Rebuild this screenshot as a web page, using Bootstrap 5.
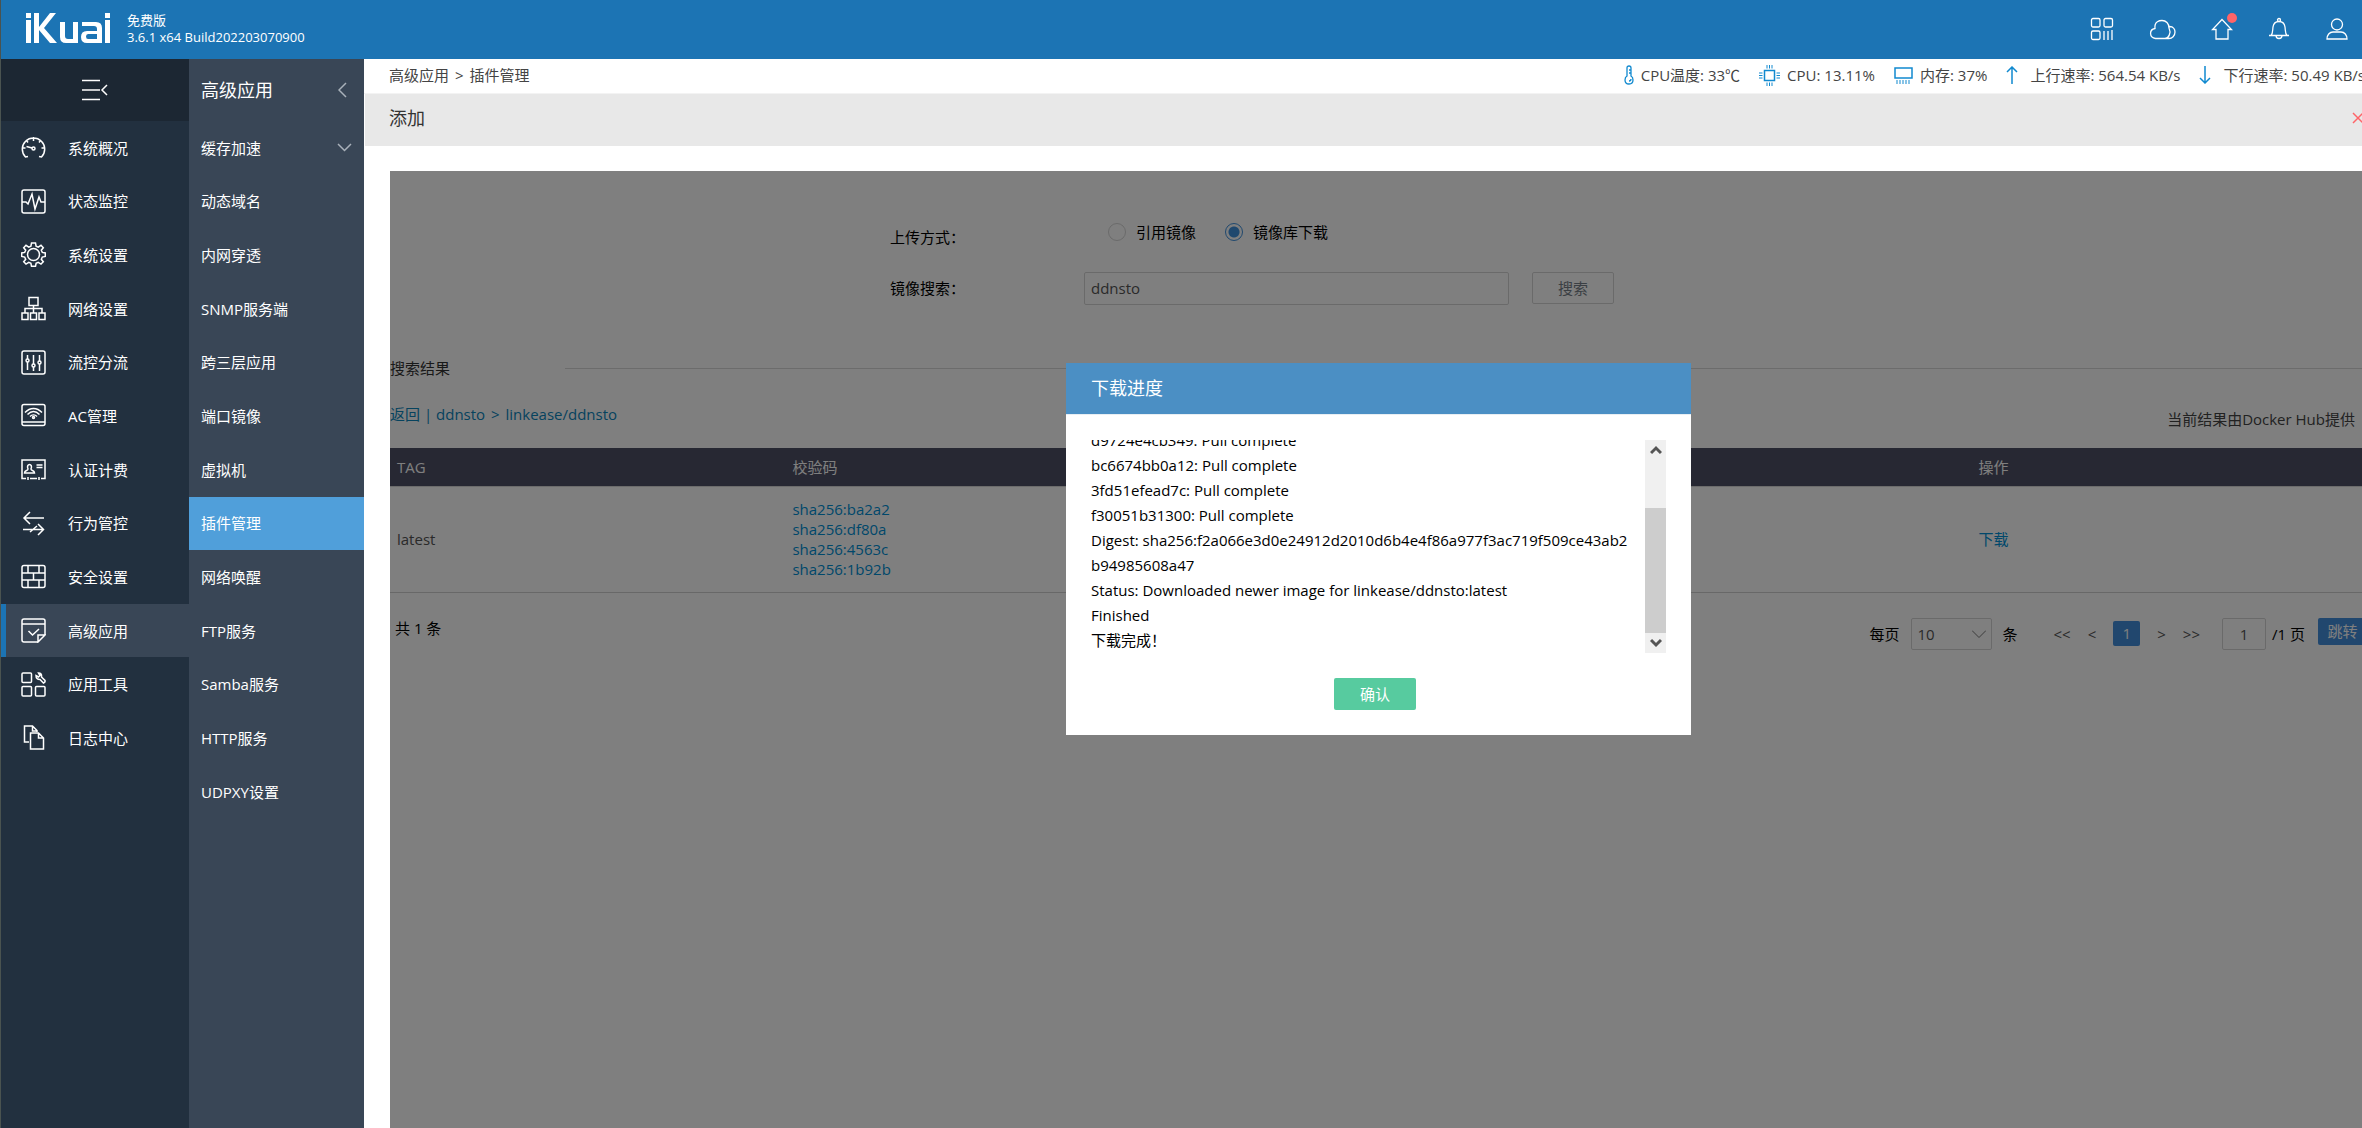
<!DOCTYPE html>
<html lang="zh-CN">
<head>
<meta charset="utf-8">
<meta name="viewport" content="width=device-width, initial-scale=1">
<title>iKuai - 插件管理</title>
<link href="https://cdn.jsdelivr.net/npm/bootstrap@5.3.0/dist/css/bootstrap.min.css" rel="stylesheet">
<style>
  body { font-family: "Open Sans", "Noto Sans CJK SC", sans-serif; font-size: 15px; line-height: 20px; color: #000; background: #fff; overflow: hidden; }
  a { text-decoration: none; }
  svg { fill: none; stroke: currentColor; stroke-width: 1.5; flex: none; display: block; }
  .shell { border-left: 1px solid #4a5350; }
  .topbar { height: 59px; background: #1c74b4; color: #fff; padding: 0 13px 2px 24px; }
  .logo { stroke: none; fill: #fff; }
  .version { font-size: 13px; line-height: 17px; margin-left: 16px; }
  .tools { gap: 35px; }
  .tools button { color: #fff; }
  .tools svg { stroke-width: 1.3; }
  .plain { background: none; border: 0; padding: 0; line-height: 20px; }
  .notice { position: absolute; top: -4px; right: -4px; width: 10px; height: 10px; border-radius: 50%; background: #ff6468; }
  .rail { width: 188px; background: #22303f; }
  .rail-top { height: 62px; background: #1c2733; color: #fff; }
  .menu-list { display: grid; grid-auto-rows: 1fr; flex: none; }
  .menu-main { height: 644px; }
  .menu-sub { height: 698px; }
  .menu-list a { color: #fff; height: 53px; display: flex; align-items: center; }
  .menu-main a { padding-left: 15px; border-left: 5px solid transparent; gap: 22px; }
  .menu-main a.current { background: #394656; border-left-color: #1c74b4; }
  .subrail { width: 175px; background: #394656; color: #fff; }
  .subrail-top { height: 62px; padding: 0 17px 0 12px; font-size: 18px; }
  .menu-sub a { padding: 0 12px; justify-content: space-between; }
  .menu-sub a.current { background: #509fda; }
  .chev { color: #a9b1ba; }
  .crumbs { height: 35px; padding: 0 0 2px 25px; border-bottom: 1px solid #f3f3f3; color: #444; }
  .crumbs a { color: #444; }
  .sep { padding: 0 2px; }
  .status { gap: 19px; margin-right: -3px; white-space: nowrap; }
  .status svg { color: #1089cf; }
  .status span { display: flex; align-items: center; gap: 7px; }
  .status .rate { gap: 12px; }
  .titlebar { height: 52px; background: #e8e8e8; padding: 0 0 4px 24px; color: #333; margin-left: 1px; }
  .titlebar h1 { font-size: 18px; font-weight: 400; margin: 0; line-height: 24px; }
  .titlebar button { color: #ff6468; margin-right: -2px; }
  .panel { margin: 25px -5px 0 26px; position: relative; padding-top: 45px; }
  .form-line { height: 48px; padding-left: 500px; }
  .form-line .lbl { width: 194px; }
  .form-line .upper { padding-top: 11px; }
  .form-check.choice { padding: 0; margin: 4px 0 0 24px; }
  .form-check.choice + .choice { margin-left: 29px; }
  .form-check-input.pick { width: 18px; height: 18px; margin: 0 10px 0 0; border: 1px solid #d5d5d5; flex: none; }
  .form-check-input.pick:checked { background: radial-gradient(circle, #3e90dc 0 5px, transparent 6px); border-color: #3e90dc; }
  .field { border: 1px solid #d5d5d5; border-radius: 2px; background: transparent; color: #555; padding: 0 6px; }
  .field-search { width: 425px; height: 33px; margin-right: 23px; }
  .act { width: 82px; height: 32px; border: 1px solid #d5d5d5; border-radius: 2px; background: transparent; color: #777f88; padding: 0; font-size: 15px; }
  .result-head { color: #333; margin-top: 46px; gap: 115px; }
  .result-head hr { margin: 0; border-color: #d8d8d8; opacity: 1; }
  .path-line { margin-top: 26px; color: #0c86bd; height: 44px; }
  .path-line a { color: #0c86bd; }
  .provider { color: #444; padding: 5px 12px 0 0; }
  .grid-table { table-layout: fixed; margin: 0; color: #555; }
  .grid-table th { background: #4e5066; color: #fff; font-weight: 400; height: 38px; padding: 0 7px; border: 0; vertical-align: middle; box-shadow: none; }
  .grid-table td { height: 106px; padding: 0 7px; vertical-align: middle; border-top: 1px solid #d8d8d8; border-bottom: 1px solid #d0d0d0; color: #555; background: transparent; box-shadow: none; }
  .grid-table td a { color: #0090d6; display: block; }
  .pager { padding: 25px 0 0 5px; }
  .pager .field { height: 32px; }
  .pager select.field { width: 81px; margin: 0 11px; appearance: none; background: url("data:image/svg+xml,%3Csvg xmlns='http://www.w3.org/2000/svg' viewBox='0 0 14 8'%3E%3Cpath d='M0 .5l7 7 7-7' fill='none' stroke='%23777'/%3E%3C/svg%3E") no-repeat right 5px center / 14px 8px; }
  .pager input.field { width: 44px; margin-right: 6px; text-align: center; }
  .pg { gap: 17px; margin: 0 22px 0 36px; }
  .pg a { color: #555; }
  .pg .now { width: 27px; height: 25px; line-height: 25px; text-align: center; color: #fff; background: #428edc; border-radius: 2px; }
  .jump { width: 49px; height: 27px; border: 0; border-radius: 2px; background: #428edc; color: #fff; padding: 0; margin-left: 13px; }
  .shade { position: absolute; inset: 0; background: rgba(0,0,0,.5); padding-top: 192px; }
  .dialog { width: 625px; background: #fff; }
  .dialog-head { height: 52px; background: #4b8fc4; color: #fff; padding: 0 25px; border-bottom: 1px solid #e8eef3; }
  .dialog-head h2 { font-size: 18px; font-weight: 400; margin: 0; }
  .dialog-body { padding: 25px; }
  .log { height: 213px; overflow: hidden; line-height: 25px; word-break: break-all; padding-right: 12px; }
  .log-bar { width: 21px; background: #f0f0f0; color: #555; flex: none; }
  .log-bar svg { margin: 0 auto; stroke-width: 3; }
  .log-thumb { height: 125px; background: #cdcdcd; }
  .ok { width: 82px; height: 32px; background: #57cb9f; color: #fff; border: 0; border-radius: 2px; padding: 0; margin: 25px 7px 0 0; }
</style>
<script src="https://cdn.jsdelivr.net/npm/bootstrap@5.3.0/dist/js/bootstrap.bundle.min.js"></script>
</head>
<body>
<div class="shell d-flex flex-column vh-100">
  <header class="topbar d-flex align-items-center flex-shrink-0">
    <svg class="logo" width="86" height="31" viewBox="0 0 86 31" role="img" aria-label="iKuai"><path d="M1 0h5v5H1zM1 7h5v23H1zM80 0h5v5h-5zM80 7h5v23h-5zM9 0h5v14L25 0h6L19 15l13 15h-7L14 17v13H9zM35 9h5v14q0 3 3 3h5V9h5v21H41q-6 0-6-6zM57 9h14q6 0 6 6v15H62q-6 0-6-6t6-6h10v-2q0-3-3-3H57zM72 21h-9q-2 0-2 2.500t2 2.500h9z"/></svg>
    <div class="version"><div>免费版</div><div>3.6.1 x64 Build202203070900</div></div>
    <div class="tools d-flex align-items-center ms-auto">
      <button class="plain" aria-label="应用"><svg width="24" height="24" viewBox="0 0 24 24"><rect x="1.500" y="1.500" width="8.500" height="8.500" rx="1.500"/><rect x="14" y="1.500" width="8.500" height="8.500" rx="1.500"/><rect x="1.500" y="14" width="8.500" height="8.500" rx="1.500"/><path d="M14 14v9M18 14v9M22 13v10"/></svg></button>
      <button class="plain" aria-label="云"><svg width="27" height="24" viewBox="0 0 27 24"><path d="M16 21.500H6.500c-6.500-1-6.500-9-.5-10C5 4 11 3.500 13 3.500c4 0 7 3 7 7.500 2.500 5-.5 10.500-4 10.500zM20.500 9.500c4 0 5.500 3 5.500 5.500 0 4-3 6.500-6 6.500h-4"/></svg></button>
      <button class="plain position-relative" aria-label="升级"><svg width="22" height="24" viewBox="0 0 22 24"><path d="M11 2.500L1.500 12.500H5V22h12v-9.500h3.500z"/></svg><span class="notice"></span></button>
      <button class="plain" aria-label="消息"><svg width="22" height="24" viewBox="0 0 22 24"><path d="M1 18.500h20M3 18.500c2-2 1.500-5 2-8.500.5-3.500 3-5.500 6-5.500s5.500 2 6 5.500c.5 3.500 0 6.500 2 8.500M8 18.500c0 4 6 4 6 0"/><circle cx="11" cy="3" r="1.500"/></svg></button>
      <button class="plain" aria-label="用户"><svg width="24" height="24" viewBox="0 0 24 24"><circle cx="12" cy="7.500" r="5.500"/><path d="M2 22c0-4 2.500-7 6-7h8c3.500 0 6 3 6 7z"/></svg></button>
    </div>
  </header>
  <div class="d-flex flex-grow-1">
    <nav class="rail flex-shrink-0 d-flex flex-column">
      <div class="rail-top d-flex align-items-center justify-content-center"><button class="plain text-white" aria-label="收起"><svg width="26" height="22" viewBox="0 0 26 22"><path d="M0 1.500h18M0 11h18M0 20.500h18M25 6l-5 5 5 5"/></svg></button></div>
      <div class="menu-list menu-main">
        <a href="#"><svg width="25" height="25" viewBox="0 0 25 25"><path d="M7 21.500L4.500 22A11.200 11.200 0 1120.500 22L18 21.500M12.500 2v4M5 5l2 2.500M20 5l-2 2.500M1.500 13h3M20.500 13h3M5.500 11.500L11 13"/><circle cx="12.500" cy="13.500" r="1.500"/></svg>系统概况</a>
        <a href="#"><svg width="25" height="25" viewBox="0 0 25 25"><rect x="1" y="1" width="23" height="23" rx="2"/><path d="M1 13h4l2 2 4-10 3 15 4-12 2 5h4"/></svg>状态监控</a>
        <a href="#"><svg width="25" height="25" viewBox="0 0 25 25"><path d="M10.500 1h4l.6 3.200 2.100.9L20 3.300 22.300 5.700 20.300 8.200l1 2.200 3 .5v3.600l-3 .6-1 2.200 2 2.500-2.300 2.300-2.800-1.700-2.100.9-.6 3h-4l-.6-3-2.100-.9L5 22.100l-2.300-2.300 2-2.500-1-2.200-3-.6v-3.600l3-.5 1-2.200-2-2.500L5 3.300l2.800 1.800 2.100-.9z"/><circle cx="12.500" cy="12.500" r="6"/></svg>系统设置</a>
        <a href="#"><svg width="25" height="25" viewBox="0 0 25 25"><path d="M8 1.500h9v8H8zM12.500 9.500V17M4 17v-4.500h17V17M1 17h6v6.500H1zM9.500 17h6v6.500h-6zM18 17h6v6.500h-6z"/></svg>网络设置</a>
        <a href="#"><svg width="25" height="25" viewBox="0 0 25 25"><rect x="1" y="1" width="23" height="23" rx="2"/><path d="M6.500 5v4M6.500 12v8M12.500 5v9M12.500 17v4M18.500 5v6M18.500 14v7"/><circle cx="6.500" cy="10.500" r="1.500"/><circle cx="12.500" cy="15.500" r="1.500"/><circle cx="18.500" cy="12.500" r="1.500"/></svg>流控分流</a>
        <a href="#"><svg width="25" height="25" viewBox="0 0 25 25"><rect x="1" y="1.500" width="23" height="21" rx="2"/><path d="M1 19h23M4 9.500c5-5.500 12-5.500 17 0M6.500 11.500c4-4 8-4 12 0M9 13.500c2-2 5-2 7 0"/><circle cx="12.500" cy="14.500" r="1"/></svg>AC管理</a>
        <a href="#"><svg width="25" height="25" viewBox="0 0 25 25"><path d="M5 21.500H1V3h23v18.500h-4M9 21.500h7M7 20v3M18 20v3M15.500 8h6M15.500 10.500h6"/><path d="M3.500 16h10c0-3-3.500-2-3.500-4 2.500-6-5.500-6-3 0 0 2-3.500 1-3.500 4z"/></svg>认证计费</a>
        <a href="#"><svg width="25" height="25" viewBox="0 0 25 25"><path d="M23 7H3M9 1L3 7l6 6M2 18.500h20.500M17 13l5.500 5.500L17 24M9 21l7-6"/></svg>行为管控</a>
        <a href="#"><svg width="25" height="25" viewBox="0 0 25 25"><rect x="1" y="1.500" width="23" height="22" rx="2"/><path d="M1 9h23M1 16h23M7 1.500V9M18 1.500V9M12.500 9v7M7 16v7.500M18 16v7.500"/></svg>安全设置</a>
        <a href="#" class="current"><svg width="25" height="25" viewBox="0 0 25 25"><path d="M24 17V3q0-2-2-2H3Q1 1 1 3v19q0 2 2 2h14zl-7 7v-7zM1 6h23M7.500 13l4 4 6.500-6"/></svg>高级应用</a>
        <a href="#"><svg width="25" height="25" viewBox="0 0 25 25"><rect x="1" y="1" width="9.500" height="9.500" rx="1"/><rect x="1" y="14.500" width="9.500" height="9.500" rx="1"/><rect x="14.500" y="14.500" width="9.500" height="9.500" rx="1"/><path d="M15 3.500q0 4 4 4l3.500 3.500q2-1 1.500-2.500L20.500 5q.5-4-3-4l1.500 2.500-1.500 1.500z"/></svg>应用工具</a>
        <a href="#"><svg width="25" height="25" viewBox="0 0 25 25"><path d="M8 17H3.500V1h8l4.500 4.500V7M11.500 1v5h4.500M9.500 8h8l5 5v11h-13zM17.500 8v5h5"/></svg>日志中心</a>
      </div>
    </nav>
    <nav class="subrail flex-shrink-0 d-flex flex-column">
      <div class="subrail-top d-flex align-items-center justify-content-between"><span>高级应用</span><svg class="chev" width="9" height="16" viewBox="0 0 9 16"><path d="M8 1L1 8l7 7"/></svg></div>
      <div class="menu-list menu-sub">
        <a href="#">缓存加速<svg class="chev" width="15" height="9" viewBox="0 0 15 9"><path d="M1 1l6.500 6.500L14 1"/></svg></a>
        <a href="#">动态域名</a><a href="#">内网穿透</a><a href="#">SNMP服务端</a><a href="#">跨三层应用</a><a href="#">端口镜像</a><a href="#">虚拟机</a><a href="#" class="current">插件管理</a><a href="#">网络唤醒</a><a href="#">FTP服务</a><a href="#">Samba服务</a><a href="#">HTTP服务</a><a href="#">UDPXY设置</a>
      </div>
    </nav>
    <main class="flex-grow-1 d-flex flex-column">
      <div class="crumbs d-flex align-items-center justify-content-between">
        <div><a href="#">高级应用</a> <span class="sep">&gt;</span> 插件管理</div>
        <div class="status d-flex">
          <span><svg width="10" height="20" viewBox="0 0 10 20"><path d="M3 11V3q0-2 2-2t2 2v8q2 1 2 4 0 4-4 4t-4-4q0-3 2-4zM5 5h2M5 8h2M5 16q2 0 2-2" stroke-width="1.300"/></svg>CPU温度: 33℃</span>
          <span><svg width="21" height="21" viewBox="0 0 21 21"><rect x="5.500" y="5.500" width="10" height="10"/><path d="M8 0v3.500M10.500 0v3.500M13 0v3.500M8 17.500V21M10.500 17.500V21M13 17.500V21M0 8h3.500M0 10.500h3.500M0 13h3.500M17.500 8H21M17.500 10.500H21M17.500 13H21" stroke-width="1"/></svg>CPU: 13.11%</span>
          <span><svg width="19" height="17" viewBox="0 0 19 17"><rect x="1" y="1" width="17" height="10"/><path d="M3 13v4M6 13v4M9 13v4M12 13v4M15 13v4" stroke-width="1"/></svg>内存: 37%</span>
          <span class="rate"><svg width="12" height="18" viewBox="0 0 12 18"><path d="M6 18V1M1 6l5-5 5 5"/></svg>上行速率: 564.54 KB/s</span>
          <span class="rate"><svg width="12" height="18" viewBox="0 0 12 18"><path d="M6 0v17M1 12l5 5 5-5"/></svg>下行速率: 50.49 KB/s</span>
        </div>
      </div>
      <div class="titlebar d-flex align-items-center justify-content-between"><h1>添加</h1><button class="plain" aria-label="关闭"><svg width="12" height="12" viewBox="0 0 12 12"><path d="M1 1l10 10M11 1L1 11"/></svg></button></div>
      <section class="panel flex-grow-1">
        <form>
          <div class="form-line d-flex align-items-start">
            <div class="lbl upper">上传方式：</div>
            <div class="form-check choice d-flex align-items-center"><input class="form-check-input pick" type="radio" name="way" id="way1"><label for="way1">引用镜像</label></div>
            <div class="form-check choice d-flex align-items-center"><input class="form-check-input pick" type="radio" name="way" id="way2" checked><label for="way2">镜像库下载</label></div>
          </div>
          <div class="form-line d-flex align-items-center">
            <label class="lbl" for="kw">镜像搜索：</label>
            <input class="field field-search" id="kw" value="ddnsto">
            <button type="button" class="act">搜索</button>
          </div>
        </form>
        <div class="result-head d-flex align-items-center"><span>搜索结果</span><hr class="flex-grow-1"></div>
        <div class="path-line d-flex justify-content-between"><div><a href="#">返回</a> | <a href="#">ddnsto</a> <span class="sep">&gt;</span> <a href="#">linkease/ddnsto</a></div><div class="provider">当前结果由Docker Hub提供</div></div>
        <table class="table grid-table">
          <thead><tr><th>TAG</th><th>校验码</th><th></th><th></th><th>操作</th></tr></thead>
          <tbody><tr><td>latest</td><td><a href="#">sha256:ba2a2</a><a href="#">sha256:df80a</a><a href="#">sha256:4563c</a><a href="#">sha256:1b92b</a></td><td></td><td></td><td><a href="#">下载</a></td></tr></tbody>
        </table>
        <div class="pager d-flex align-items-start">
          <div class="me-auto">共 1 条</div>
          <div class="d-flex align-items-center">
            <label for="per">每页</label><select class="field" id="per"><option>10</option></select>条
            <div class="pg d-flex align-items-center"><a href="#">&lt;&lt;</a><a href="#">&lt;</a><a href="#" class="now">1</a><a href="#">&gt;</a><a href="#">&gt;&gt;</a></div>
            <input class="field" aria-label="页码" value="1"><span>/1 页</span>
          </div>
          <button class="jump">跳转</button>
        </div>
        <div class="shade">
          <div class="dialog mx-auto" role="dialog" aria-labelledby="dt">
            <div class="dialog-head d-flex align-items-center"><h2 id="dt">下载进度</h2></div>
            <div class="dialog-body">
              <div class="d-flex">
                <div class="log flex-grow-1 d-flex flex-column justify-content-end">
                  <div>d9724e4cb349: Pull complete</div><div>bc6674bb0a12: Pull complete</div><div>3fd51efead7c: Pull complete</div><div>f30051b31300: Pull complete</div>
                  <div>Digest: sha256:f2a066e3d0e24912d2010d6b4e4f86a977f3ac719f509ce43ab2b94985608a47</div>
                  <div>Status: Downloaded newer image for linkease/ddnsto:latest</div><div>Finished</div><div>下载完成！</div>
                </div>
                <div class="log-bar d-flex flex-column"><svg class="mt-1" width="12" height="12" viewBox="0 0 12 12"><path d="M1 9l5-5 5 5"/></svg><div class="log-thumb mt-auto"></div><svg class="my-1" width="12" height="12" viewBox="0 0 12 12"><path d="M1 3l5 5 5-5"/></svg></div>
              </div>
              <div class="text-center"><button class="ok">确认</button></div>
            </div>
          </div>
        </div>
      </section>
    </main>
  </div>
</div>
</body>
</html>
